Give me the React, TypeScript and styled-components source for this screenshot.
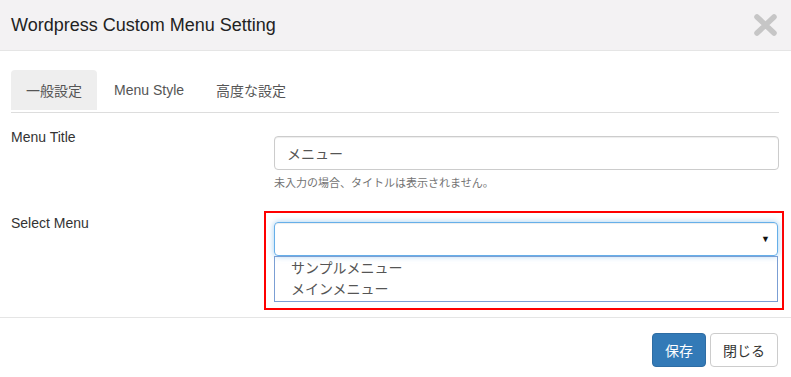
import styled, { createGlobalStyle } from "styled-components"

const GlobalStyle = createGlobalStyle`
  body {
    margin: 0;
    background: #fff;
    font-family: "Liberation Sans", Arial, "Noto Sans CJK JP", sans-serif;
    font-size: 14px;
    color: #333;
  }
`

const StyledModal = styled.div`
  width: 791px;
  display: flex;
  flex-direction: column;
  background: #fff;

  & > * {
    flex-shrink: 0;
  }
`

const StyledHeader = styled.div`
  height: 50px;
  display: flex;
  align-items: center;
  justify-content: space-between;
  padding: 0 14px 0 11px;
  background: #f3f2f3;
  border-bottom: 1px solid #e5e5e5;
`

const StyledTitle = styled.h4`
  margin: 0;
  font-size: 18px;
  font-weight: normal;
  color: #222;
`

const StyledClose = styled.button`
  display: flex;
  padding: 0;
  border: 0;
  background: none;
`

const StyledBody = styled.div`
  padding: 19px 12px 7px 11px;
  border-bottom: 1px solid #e5e5e5;
`

const StyledTabs = styled.div`
  display: flex;
  gap: 2px;
  border-bottom: 1px solid #ddd;
`

const StyledTab = styled.div<{ $active?: boolean }>`
  height: 40px;
  margin-bottom: 2px;
  padding: 0 15px;
  display: flex;
  align-items: center;
  border-radius: 4px 4px 0 0;
  background: ${(p) => (p.$active ? "#eeeeee" : "transparent")};
  color: #555;
  font-size: 14px;
`

const StyledRow = styled.div<{ $top: number }>`
  display: grid;
  grid-template-columns: 253px 1fr;
  margin-top: ${(p) => p.$top}px;
`

const StyledLabel = styled.label<{ $pad: number }>`
  padding-top: ${(p) => p.$pad}px;
  line-height: 20px;
  color: #333;
`

const StyledField = styled.div`
  padding: 9px 0 0 10px;
`

const StyledInput = styled.div`
  height: 34px;
  box-sizing: border-box;
  display: flex;
  align-items: center;
  padding: 0 12px;
  border: 1px solid #ccc;
  border-radius: 4px;
  box-shadow: inset 0 1px 1px rgba(0, 0, 0, 0.075);
  color: #555;
`

const StyledHelp = styled.p`
  margin: 5px 0 0;
  font-size: 11px;
  line-height: 16px;
  color: #737373;
`

const StyledHighlight = styled.div`
  margin-right: -5px;
  padding: 9px 4px 6px 8px;
  border: 2px solid #f00;
`

const StyledSelect = styled.div`
  height: 34px;
  box-sizing: border-box;
  display: flex;
  align-items: center;
  justify-content: flex-end;
  padding: 0 7px;
  border: 1px solid #66afe9;
  border-radius: 4px;
  box-shadow: inset 0 1px 1px rgba(0, 0, 0, 0.075),
    0 0 6px rgba(102, 175, 233, 0.6);
  font-size: 9px;
  color: #111;
`

const StyledList = styled.ul`
  margin: 0;
  padding: 1px 0;
  list-style: none;
  border: 1px solid #7b9fd4;
`

const StyledOption = styled.li`
  padding-left: 16px;
  line-height: 21px;
  color: #555;
`

const StyledFooter = styled.div`
  display: flex;
  justify-content: flex-end;
  gap: 4px;
  padding: 15px 13px;
`

const StyledButton = styled.button<{ $primary?: boolean }>`
  height: 34px;
  padding: 0 12px;
  border-radius: 4px;
  font-family: inherit;
  font-size: 14px;
  border: 1px solid ${(p) => (p.$primary ? "#2e6da4" : "#ccc")};
  background: ${(p) => (p.$primary ? "#337ab7" : "#fff")};
  color: ${(p) => (p.$primary ? "#fff" : "#333")};
`

const CloseIcon = () => (
  <svg width="23" height="22" viewBox="0 0 23 22">
    <path
      d="M3 3 L20 19 M20 3 L3 19"
      stroke="#c6c6c6"
      strokeWidth="5.5"
      strokeLinecap="round"
    />
  </svg>
)

const App = () => {
  return (
    <StyledModal>
      <GlobalStyle />
      <StyledHeader>
        <StyledTitle>Wordpress Custom Menu Setting</StyledTitle>
        <StyledClose>
          <CloseIcon />
        </StyledClose>
      </StyledHeader>
      <StyledBody>
        <StyledTabs>
          <StyledTab $active>一般設定</StyledTab>
          <StyledTab>Menu Style</StyledTab>
          <StyledTab>高度な設定</StyledTab>
        </StyledTabs>
        <StyledRow $top={14}>
          <StyledLabel $pad={0}>Menu Title</StyledLabel>
          <StyledField>
            <StyledInput>メニュー</StyledInput>
            <StyledHelp>未入力の場合、タイトルは表示されません。</StyledHelp>
          </StyledField>
        </StyledRow>
        <StyledRow $top={20}>
          <StyledLabel $pad={2}>Select Menu</StyledLabel>
          <StyledHighlight>
            <StyledSelect>▼</StyledSelect>
            <StyledList>
              <StyledOption>サンプルメニュー</StyledOption>
              <StyledOption>メインメニュー</StyledOption>
            </StyledList>
          </StyledHighlight>
        </StyledRow>
      </StyledBody>
      <StyledFooter>
        <StyledButton $primary>保存</StyledButton>
        <StyledButton>閉じる</StyledButton>
      </StyledFooter>
    </StyledModal>
  )
}

export default App
